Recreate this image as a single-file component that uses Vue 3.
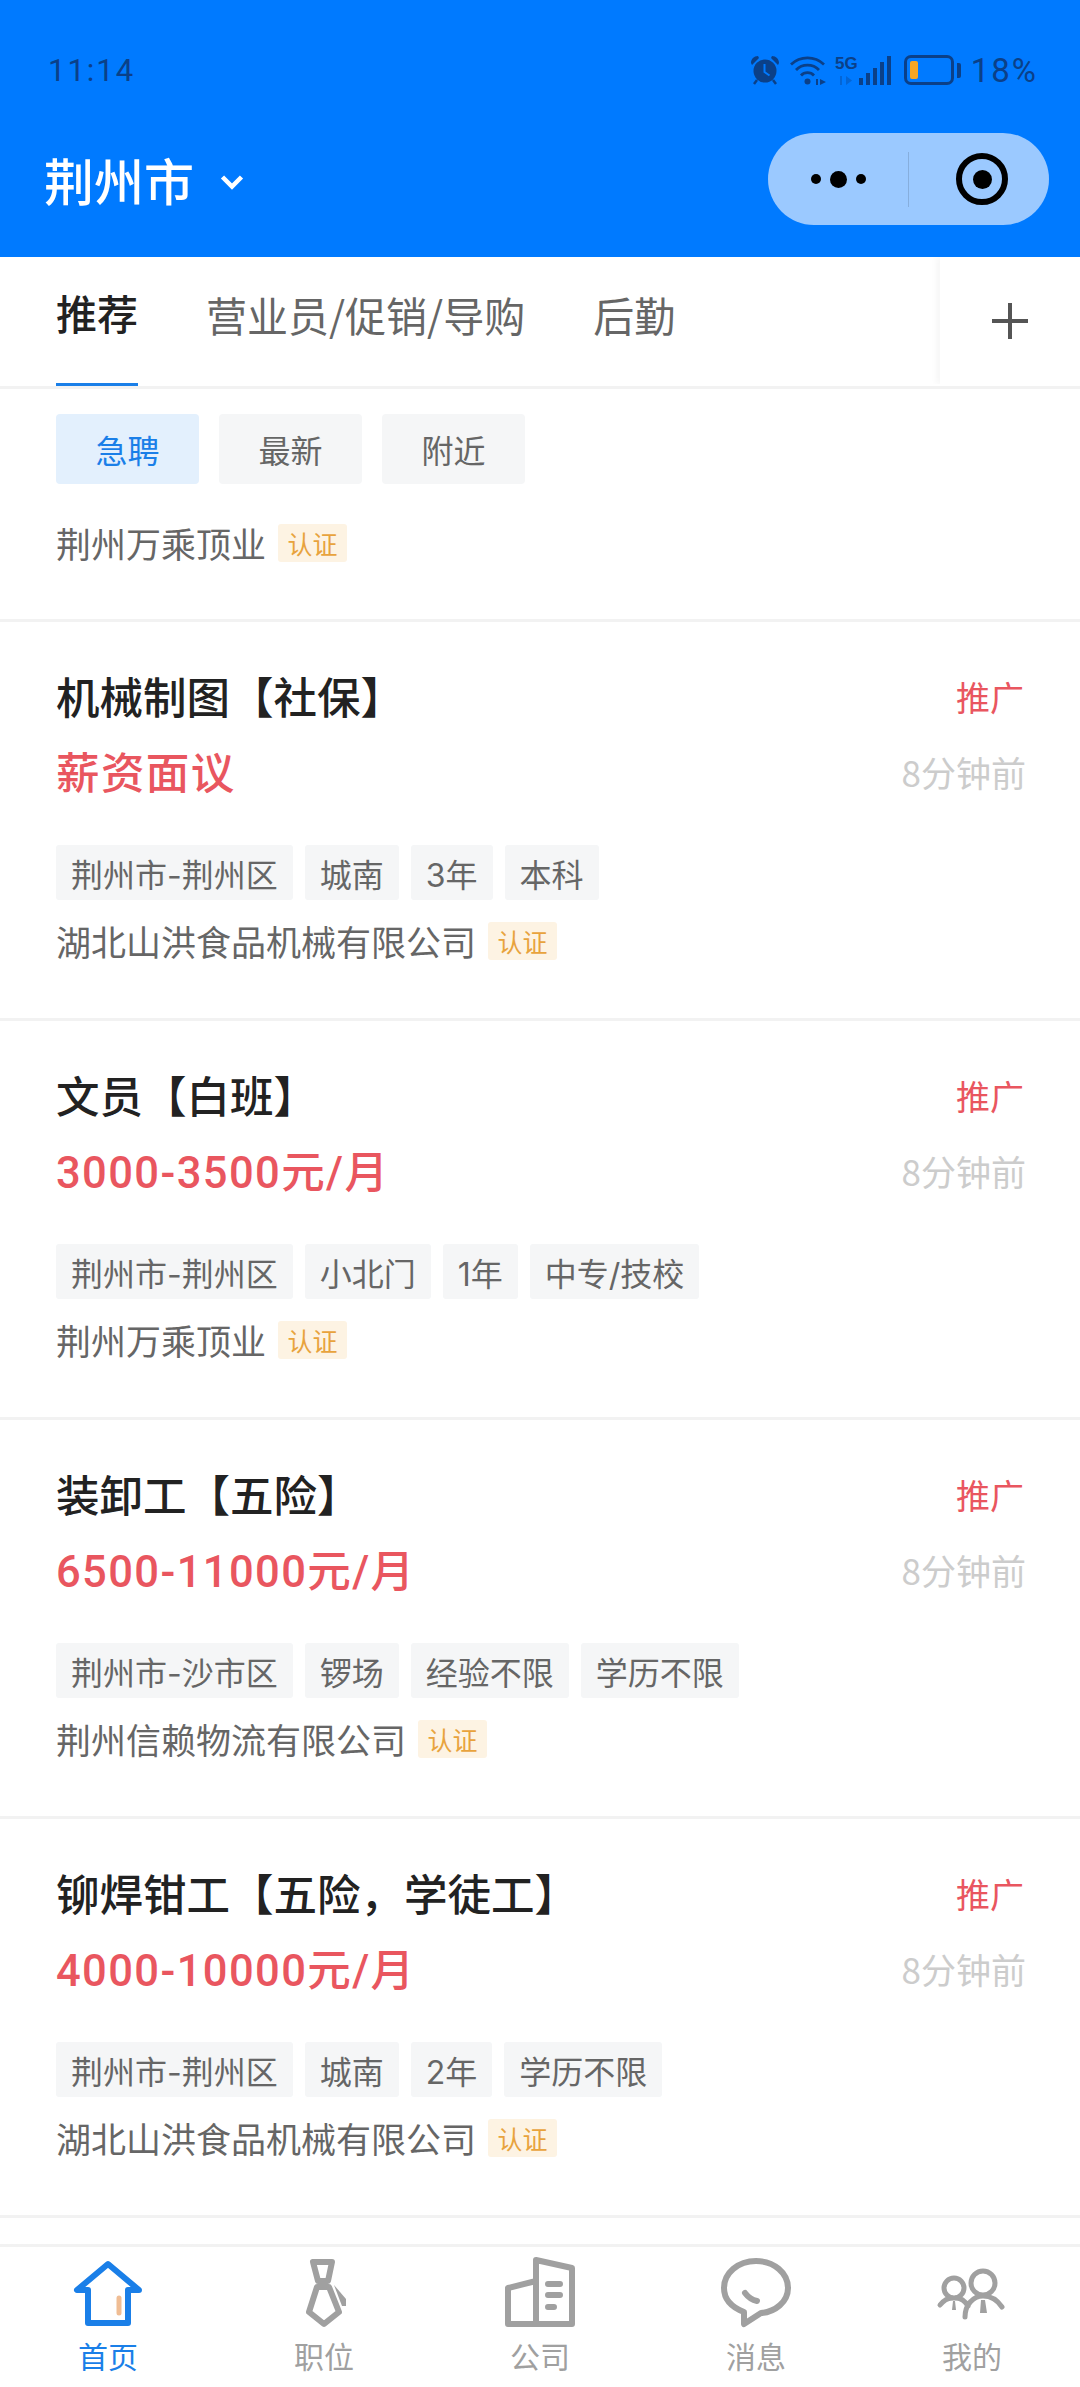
<template>
  <div class="page">
    <header class="header">
      <div class="status-bar">
        <span class="time">11:14</span>
        <div class="status-icons">
          <svg width="30" height="30" viewBox="0 0 30 30">
            <circle cx="15" cy="16" r="11.5" fill="#0b4088" />
            <path d="M14.5 9v8l5 3.5" fill="none" stroke="#007aff" stroke-width="2" />
            <path d="M1 8c0-4 3-7 7-7l1 2-7 7zM29 8c0-4-3-7-7-7l-1 2 7 7z" fill="#0b4088" />
            <path d="M7 25l-3 4M23 25l3 4" stroke="#0b4088" stroke-width="2.5" />
          </svg>
          <svg class="wifi" width="37" height="30" viewBox="0 0 37 30">
            <path d="M1 9.500a24 24 0 0 1 33 0M6 15a16 16 0 0 1 23 0M11 20.500a9 9 0 0 1 13 0" fill="none" stroke="#0b4088" stroke-width="2.800" />
            <circle cx="17.500" cy="26.500" r="3" fill="#0b4088" />
            <path d="M26 24h2v6h-2zM30 24l6 3-6 3z" fill="#0b4088" />
          </svg>
          <div class="net">
            <div class="net-type">
              <span class="net-5g">5G</span>
              <svg width="16" height="9" viewBox="0 0 16 9">
                <path d="M2 0h2v9H2zM8 0l6 4.500-6 4.500z" fill="#0b4088" opacity="0.35" />
              </svg>
            </div>
            <svg width="32" height="30" viewBox="0 0 32 30">
              <rect x="0" y="23" width="4" height="7" fill="#0b4088" />
              <rect x="7" y="18" width="4" height="12" fill="#0b4088" />
              <rect x="14" y="13" width="4" height="17" fill="#0b4088" />
              <rect x="21" y="7" width="4" height="23" fill="#0b4088" />
              <rect x="28" y="1" width="4" height="29" fill="#0b4088" />
            </svg>
          </div>
          <div class="battery-wrap">
            <div class="battery"><div class="battery-level"></div></div>
            <span class="battery-cap"></span>
          </div>
          <span class="percent">18%</span>
        </div>
      </div>
      <div class="nav">
        <div class="city">
          <span>荆州市</span>
          <svg class="city-arrow" width="24" height="16" viewBox="0 0 24 16">
            <path d="M2.500 3l9.500 9.500L21.500 3" fill="none" stroke="#fff" stroke-width="4.500" />
          </svg>
        </div>
        <div class="capsule">
          <div class="capsule-left">
            <i class="dot"></i><i class="dot big"></i><i class="dot"></i>
          </div>
          <div class="capsule-line"></div>
          <div class="capsule-right">
            <div class="target"><i></i></div>
          </div>
        </div>
      </div>
    </header>

    <div class="tabs">
      <div class="tab-list">
        <div v-for="(t, i) in tabs" :key="t" class="tab" :class="{ active: i === 0 }">{{ t }}</div>
      </div>
      <div class="tab-add">
        <svg width="38" height="38" viewBox="0 0 38 38">
          <path d="M19 1v36M1 19h36" stroke="#555" stroke-width="4" />
        </svg>
      </div>
    </div>

    <main class="list">
      <section class="filter-card">
        <div class="filters">
          <span v-for="(f, i) in filters" :key="f" class="filter" :class="{ on: i === 0 }">{{ f }}</span>
        </div>
        <div class="company">
          <span>荆州万乘顶业</span><em class="cert">认证</em>
        </div>
      </section>

      <article v-for="job in jobs" :key="job.title" class="job">
        <div class="job-row">
          <h3 class="job-title">{{ job.title }}</h3>
          <span class="promo">推广</span>
        </div>
        <div class="job-row salary-row">
          <span class="salary">{{ job.salary }}</span>
          <span class="ago">8分钟前</span>
        </div>
        <div class="tags">
          <span v-for="t in job.tags" :key="t" class="tag">{{ t }}</span>
        </div>
        <div class="company">
          <span>{{ job.company }}</span><em class="cert">认证</em>
        </div>
      </article>
    </main>

    <nav class="tabbar">
      <div class="bar-item on">
        <svg width="72" height="72" viewBox="0 0 72 72">
          <path d="M36 7L5 33h11v33h40V33h11z" fill="none" stroke="#1a7fe8" stroke-width="6" stroke-linejoin="round" />
          <path d="M47 41v15" stroke="#f0bd94" stroke-width="5" stroke-linecap="round" />
        </svg>
        <span>首页</span>
      </div>
      <div class="bar-item">
        <svg width="72" height="72" viewBox="0 0 72 72">
          <path d="M25 5h19l-4 19H30z" fill="none" stroke="#a0a0a0" stroke-width="6" stroke-linejoin="round" />
          <path d="M29 30h12l10 25-15 12-15-12z" fill="none" stroke="#a0a0a0" stroke-width="6" stroke-linejoin="round" />
          <path d="M46 28l12 14v7h-4z" fill="#a0a0a0" />
        </svg>
        <span>职位</span>
      </div>
      <div class="bar-item">
        <svg width="72" height="72" viewBox="0 0 72 72">
          <path d="M32 24L4 31v36h28M32 67V3l36 8v56z" fill="none" stroke="#a0a0a0" stroke-width="6" stroke-linejoin="round" />
          <path d="M44 27h12M44 38h12M44 50h6" stroke="#a0a0a0" stroke-width="6" stroke-linecap="round" />
        </svg>
        <span>公司</span>
      </div>
      <div class="bar-item">
        <svg width="72" height="72" viewBox="0 0 72 72">
          <path d="M36 4c18 0 32 12 32 27 0 14-13 24-27 25L24 67V55C11 50 4 42 4 31 4 16 18 4 36 4z" fill="none" stroke="#a0a0a0" stroke-width="6" stroke-linejoin="round" />
          <path d="M25 36c3 4 7 7 12 8" fill="none" stroke="#a0a0a0" stroke-width="6" stroke-linecap="round" />
        </svg>
        <span>消息</span>
      </div>
      <div class="bar-item">
        <svg width="72" height="72" viewBox="0 0 72 72">
          <circle cx="18" cy="31" r="10" fill="none" stroke="#a0a0a0" stroke-width="5" />
          <circle cx="47" cy="26" r="12" fill="none" stroke="#a0a0a0" stroke-width="5" />
          <path d="M4 48c4-5 8-7 12-7M20 41c5 0 9 3 12 8M29 60c0-12 8-21 18-21s15 5 19 11" fill="none" stroke="#a0a0a0" stroke-width="5" stroke-linecap="round" />
          <path d="M17 44h2l1 9h-4zM45 43h4l2 13h-7z" fill="#a0a0a0" />
        </svg>
        <span>我的</span>
      </div>
    </nav>
  </div>
</template>

<script setup>
const tabs = ['推荐', '营业员/促销/导购', '后勤'];
const filters = ['急聘', '最新', '附近'];

const jobs = [
  {
    title: '机械制图【社保】',
    salary: '薪资面议',
    tags: ['荆州市-荆州区', '城南', '3年', '本科'],
    company: '湖北山洪食品机械有限公司'
  },
  {
    title: '文员【白班】',
    salary: '3000-3500元/月',
    tags: ['荆州市-荆州区', '小北门', '1年', '中专/技校'],
    company: '荆州万乘顶业'
  },
  {
    title: '装卸工【五险】',
    salary: '6500-11000元/月',
    tags: ['荆州市-沙市区', '锣场', '经验不限', '学历不限'],
    company: '荆州信赖物流有限公司'
  },
  {
    title: '铆焊钳工【五险，学徒工】',
    salary: '4000-10000元/月',
    tags: ['荆州市-荆州区', '城南', '2年', '学历不限'],
    company: '湖北山洪食品机械有限公司'
  }
];
</script>

<style>
html, body {
  margin: 0;
  background: #fff;
}
</style>

<style scoped>
.page {
  display: flex;
  flex-direction: column;
  width: 1080px;
  height: 2387px;
  overflow: hidden;
  font-family: "Noto Sans CJK SC", "Noto Sans", sans-serif;
  background: #fff;
}

.header {
  flex: none;
  height: 257px;
  background: #007aff;
}

.status-bar {
  display: flex;
  align-items: center;
  justify-content: space-between;
  height: 70px;
  padding: 35px 42px 0 48px;
}

.time {
  font-family: Roboto, sans-serif;
  font-size: 31px;
  letter-spacing: 2px;
  color: #0b4088;
}

.status-icons {
  display: flex;
  align-items: center;
  gap: 10px;
}

.wifi {
  margin-right: -2px;
}

.net {
  display: flex;
  align-items: stretch;
  gap: 1px;
}

.net-type {
  display: flex;
  flex-direction: column;
  justify-content: space-between;
  align-items: center;
  height: 30px;
}

.net-5g {
  font-family: "Liberation Sans", sans-serif;
  font-size: 17px;
  line-height: 17px;
  font-weight: 700;
  color: #0b4088;
}

.battery-wrap {
  display: flex;
  align-items: center;
  gap: 3px;
  margin-left: 3px;
}

.battery {
  display: flex;
  align-items: center;
  width: 50px;
  height: 30px;
  padding: 0 3px;
  box-sizing: border-box;
  border: 3px solid #0b4088;
  border-radius: 7px;
}

.battery-level {
  width: 8px;
  height: 18px;
  background: #f5a623;
  border-radius: 2px;
}

.battery-cap {
  width: 4px;
  height: 15px;
  background: #0b4088;
  border-radius: 0 2px 2px 0;
}

.percent {
  font-family: Roboto, sans-serif;
  font-size: 33px;
  letter-spacing: 2px;
  color: #0b4088;
}

.nav {
  display: flex;
  align-items: center;
  justify-content: space-between;
  padding: 28px 31px 0 44px;
}

.city {
  display: flex;
  align-items: center;
  gap: 26px;
  font-size: 50px;
  line-height: 68px;
  font-weight: 500;
  color: #fff;
}

.city-arrow {
  margin-top: 6px;
}

.capsule {
  display: flex;
  align-items: center;
  width: 281px;
  height: 92px;
  background: #9bc9ff;
  border-radius: 46px;
}

.capsule-left {
  display: flex;
  align-items: center;
  justify-content: center;
  gap: 9px;
  flex: 1;
}

.dot {
  width: 10px;
  height: 10px;
  background: #000;
  border-radius: 50%;
}

.dot.big {
  width: 17px;
  height: 17px;
}

.capsule-line {
  width: 1px;
  height: 55px;
  background: #86aedd;
}

.capsule-right {
  display: flex;
  align-items: center;
  justify-content: center;
  flex: 1;
}

.target {
  display: flex;
  align-items: center;
  justify-content: center;
  width: 40px;
  height: 40px;
  margin-left: 6px;
  border: 6px solid #000;
  border-radius: 50%;
}

.target i {
  width: 19px;
  height: 19px;
  background: #000;
  border-radius: 50%;
}

.tabs {
  flex: none;
  display: flex;
  height: 132px;
  box-sizing: border-box;
  border-bottom: 3px solid #f2f2f2;
}

.tab-list {
  display: flex;
  flex: 1;
  gap: 68px;
  padding-left: 56px;
}

.tab {
  display: flex;
  align-items: center;
  height: 129px;
  box-sizing: border-box;
  padding-bottom: 16px;
  font-size: 41px;
  color: #666;
}

.tab.active {
  font-weight: 500;
  color: #222;
  border-bottom: 3px solid #1a7fe8;
}

.tab-add {
  display: flex;
  align-items: center;
  justify-content: center;
  width: 140px;
  height: 127px;
  box-shadow: -4px 0 6px #f7f7f7;
  clip-path: inset(0 0 0 -12px);
}

.list {
  flex: 1;
  overflow: hidden;
}

.filter-card {
  height: 233px;
  box-sizing: border-box;
  padding: 25px 56px 0;
  border-bottom: 3px solid #f2f2f2;
}

.filters {
  display: flex;
  gap: 20px;
}

.filter {
  display: flex;
  align-items: center;
  justify-content: center;
  width: 143px;
  height: 70px;
  font-size: 32px;
  color: #666;
  background: #f5f6f7;
  border-radius: 4px;
}

.filter.on {
  color: #1a7fe8;
  background: #e3f0fd;
}

.filter-card .company {
  margin-top: 32px;
}

.job {
  height: 399px;
  box-sizing: border-box;
  padding: 43px 56px 0;
  border-bottom: 3px solid #f2f2f2;
}

.job-row {
  display: flex;
  align-items: center;
  justify-content: space-between;
  height: 60px;
}

.salary-row {
  margin-top: 15px;
}

.job-title {
  margin: 0;
  font-size: 43.500px;
  font-weight: 500;
  color: #222;
}

.promo {
  margin-top: 2px;
  font-size: 34px;
  color: #e9565f;
}

.salary {
  font-family: Roboto, "Noto Sans CJK SC", sans-serif;
  font-size: 43.500px;
  font-weight: 500;
  letter-spacing: 1.400px;
  color: #e9565f;
}

.ago {
  margin-top: 2px;
  margin-right: -2px;
  font-size: 35px;
  color: #ccc;
}

.tags {
  display: flex;
  gap: 12px;
  margin-top: 45px;
}

.tag {
  display: flex;
  align-items: center;
  height: 55px;
  padding: 0 15px;
  font-family: Inter, "Noto Sans CJK SC", sans-serif;
  font-size: 32px;
  color: #666;
  background: #f5f6f7;
  border-radius: 3px;
}

.company {
  display: flex;
  align-items: center;
  gap: 12px;
  height: 52px;
  margin-top: 14px;
  font-size: 35px;
  color: #666;
}

.cert {
  display: flex;
  align-items: center;
  justify-content: center;
  width: 69px;
  height: 38px;
  margin-top: 2px;
  font-size: 25px;
  font-style: normal;
  color: #e8a33d;
  background: #fdf3e3;
  border-radius: 3px;
}

.tabbar {
  flex: none;
  display: flex;
  height: 143px;
  box-sizing: border-box;
  border-top: 3px solid #f2f2f2;
}

.bar-item {
  display: flex;
  flex: 1;
  flex-direction: column;
  align-items: center;
  padding-top: 10px;
  font-size: 30px;
  line-height: 40px;
  color: #a0a0a0;
}

.bar-item svg {
  margin-bottom: 6px;
}

.bar-item.on {
  color: #1a7fe8;
}
</style>
